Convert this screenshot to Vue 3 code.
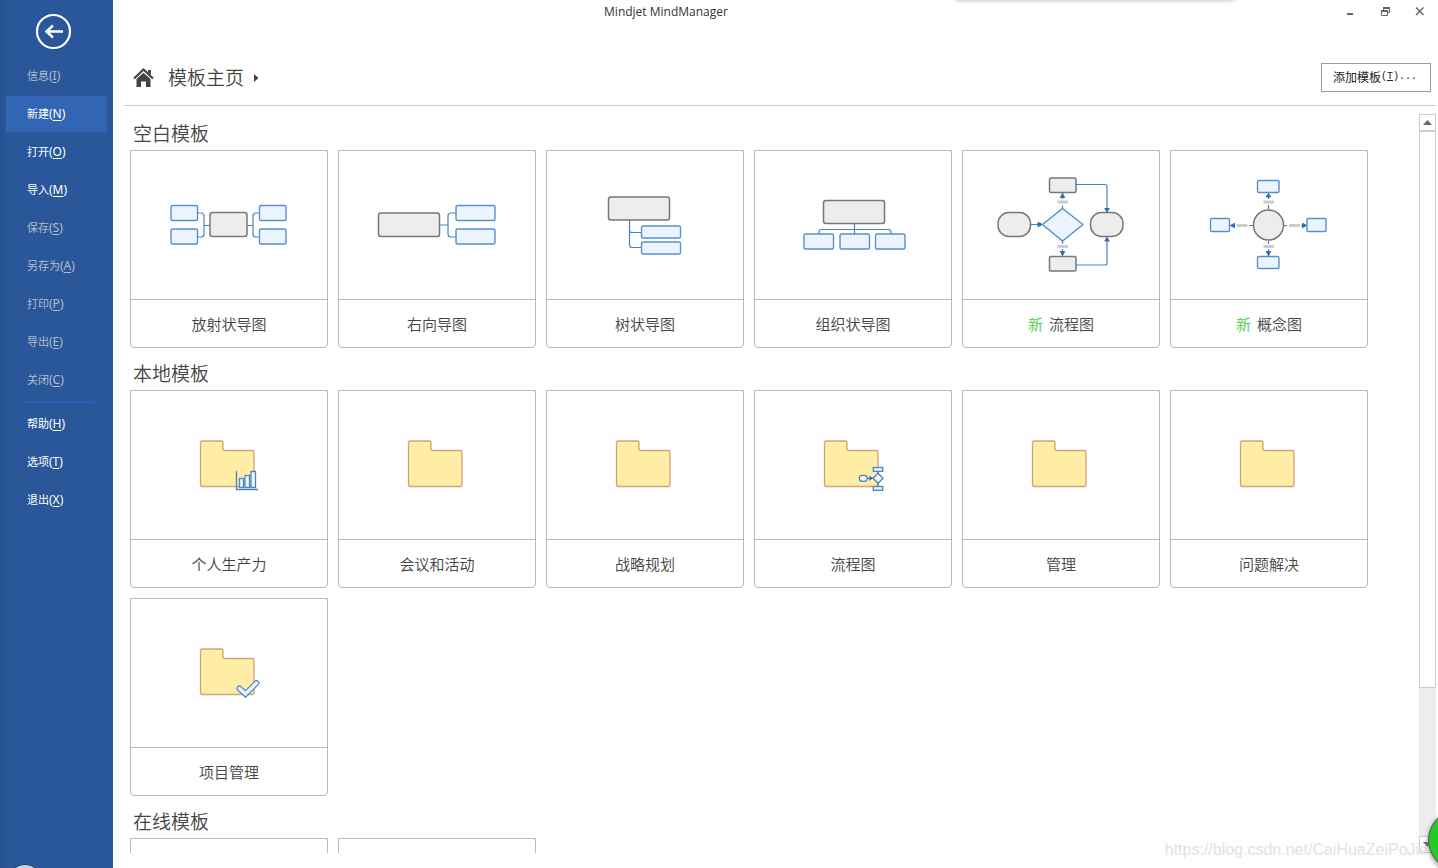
<script setup>
const menu = [
  { text: '信息', key: 'I', disabled: true },
  { text: '新建', key: 'N', active: true },
  { text: '打开', key: 'O' },
  { text: '导入', key: 'M' },
  { text: '保存', key: 'S', disabled: true },
  { text: '另存为', key: 'A', disabled: true },
  { text: '打印', key: 'P', disabled: true },
  { text: '导出', key: 'E', disabled: true },
  { text: '关闭', key: 'C', disabled: true }
]
const appMenu = [
  { text: '帮助', key: 'H' },
  { text: '选项', key: 'T' },
  { text: '退出', key: 'X' }
]
const sections = [
  {
    title: '空白模板',
    cards: [
      { name: '放射状导图', art: 'radial' },
      { name: '右向导图', art: 'right' },
      { name: '树状导图', art: 'tree' },
      { name: '组织状导图', art: 'org' },
      { name: '流程图', art: 'flow', isNew: true },
      { name: '概念图', art: 'concept', isNew: true }
    ]
  },
  {
    title: '本地模板',
    cards: [
      { name: '个人生产力', art: 'folder', badge: 'chart' },
      { name: '会议和活动', art: 'folder' },
      { name: '战略规划', art: 'folder' },
      { name: '流程图', art: 'folder', badge: 'flow' },
      { name: '管理', art: 'folder' },
      { name: '问题解决', art: 'folder' },
      { name: '项目管理', art: 'folder', badge: 'check' }
    ]
  },
  {
    title: '在线模板',
    cards: [{ art: 'folder' }, { art: 'folder' }]
  }
]
</script>

<template>
  <div class="app">
    <aside class="sidebar">
      <button class="back" aria-label="返回">
        <svg width="37" height="37" viewBox="0 0 37 37">
          <circle cx="18.5" cy="18.5" r="16.5" fill="none" stroke="#fff" stroke-width="2.2" />
          <path d="M28 18.5H11.500M18 12.500L11.500 18.500L18 24.500" fill="none" stroke="#fff" stroke-width="2.500" />
        </svg>
      </button>
      <nav class="menu">
        <button
          v-for="m in menu"
          :key="m.key"
          class="item"
          :class="{ active: m.active }"
          :disabled="m.disabled"
        >{{ m.text }}<span class="key">(<u>{{ m.key }}</u>)</span></button>
        <hr class="divider" />
        <button v-for="m in appMenu" :key="m.key" class="item">{{ m.text }}<span class="key">(<u>{{ m.key }}</u>)</span></button>
      </nav>
      <span class="orb"></span>
    </aside>

    <main class="main">
      <header class="titlebar">
        <span class="app-title">Mindjet MindManager</span>
        <div class="controls">
          <button aria-label="最小化">
            <svg width="12" height="12" viewBox="0 0 12 12"><path d="M3 8h6v2H3z" fill="#666" /></svg>
          </button>
          <button aria-label="还原">
            <svg width="12" height="12" viewBox="0 0 12 12">
              <path d="M4.500 5V2.500H10.500V7.500H8.500M2.500 5.500H8.500V10.500H2.500Z" fill="none" stroke="#666" />
              <path d="M4 2h7v2H4zM2 5h7v2H2z" fill="#666" />
            </svg>
          </button>
          <button aria-label="关闭窗口">
            <svg width="12" height="12" viewBox="0 0 12 12"><path d="M2 2.500L9.500 10M9.500 2.500L2 10" stroke="#666" stroke-width="1.500" /></svg>
          </button>
        </div>
      </header>

      <div class="crumbs">
        <svg width="22" height="20" viewBox="0 0 22 20">
          <path d="M1 10.500L10.500 1.500L20 10.500" fill="none" stroke="#444" stroke-width="2.200" />
          <path d="M15 2h3v5l-3-2.500z" fill="#444" />
          <path d="M3.500 11L10.500 4.700L17.500 11V19H13V13.500H8V19H3.500Z" fill="#444" />
        </svg>
        <h1>模板主页</h1>
        <svg width="5" height="8" viewBox="0 0 5 8"><path d="M0 0L4.500 4L0 8Z" fill="#444" /></svg>
        <button class="add">添加模板<span class="add-key">(<u>T</u>)...</span></button>
      </div>

      <div class="body">
        <div class="list">
          <section v-for="s in sections" :key="s.title">
            <h2>{{ s.title }}</h2>
            <div class="grid">
              <button v-for="(c, i) in s.cards" :key="i" class="card">
                <svg class="art" viewBox="1 1 196 148">
                  <g v-if="c.art === 'radial'">
                    <g class="line">
                      <path d="M67.500 63H71Q74 63 74 66V84Q74 87 71 87H67.500M74 75.500H80" />
                      <path d="M129.500 63H126Q123 63 123 66V84Q123 87 126 87H129.500M123 75.500H117" />
                    </g>
                    <rect class="blue" x="41" y="55.500" width="26.500" height="15" rx="1.500" />
                    <rect class="blue" x="41" y="79" width="26.500" height="15" rx="1.500" />
                    <rect class="blue" x="129.500" y="55.500" width="26.500" height="15" rx="1.500" />
                    <rect class="blue" x="129.500" y="79" width="26.500" height="15" rx="1.500" />
                    <rect class="grey" x="80" y="62.500" width="37" height="24" rx="2.500" />
                  </g>
                  <g v-else-if="c.art === 'right'">
                    <path class="line" d="M118 63H113Q110 63 110 66V84Q110 87 113 87H118M102 75H110" />
                    <rect class="grey" x="40.500" y="63" width="61" height="23.500" rx="2.500" />
                    <rect class="blue" x="118" y="55.500" width="39" height="15" rx="1.500" />
                    <rect class="blue" x="118" y="79" width="39" height="15" rx="1.500" />
                  </g>
                  <g v-else-if="c.art === 'tree'">
                    <path class="line" d="M83.500 70V95Q83.500 97.500 86 97.500H95.500M83.500 80Q83.500 82.500 86 82.500H95.500" />
                    <rect class="grey" x="62.500" y="47" width="61" height="23" rx="2.500" />
                    <rect class="blue" x="95.500" y="76" width="39" height="12" rx="1.500" />
                    <rect class="blue" x="95.500" y="92" width="39" height="12" rx="1.500" />
                  </g>
                  <g v-else-if="c.art === 'org'">
                    <path class="line" d="M100.500 73.500V84M65 84V82Q65 79.500 67.500 79.500H134.500Q137 79.500 137 82V84" />
                    <rect class="grey" x="69.500" y="50.500" width="61" height="23" rx="2.500" />
                    <rect class="blue" x="50" y="84" width="29.500" height="15" rx="1.500" />
                    <rect class="blue" x="86" y="84" width="29.500" height="15" rx="1.500" />
                    <rect class="blue" x="121.500" y="84" width="29.500" height="15" rx="1.500" />
                  </g>
                  <g v-else-if="c.art === 'flow'">
                    <path class="line" d="M68.500 74.500H80M114 34.500H143Q145 34.500 145 36.500V62M114 115H143Q145 115 145 113V87M100.500 58.500V55.500M100.500 49V43M100.500 91V94M100.500 99V106" />
                    <path class="tip" d="M80.500 74.500L76 72.300V76.700ZM145 62L142.800 58.500H147.200ZM145 87.500L142.800 91H147.200ZM100.500 43.500L98.300 47.500H102.700ZM100.500 105.500L98.300 101.500H102.700Z" />
                    <rect class="grey" x="36" y="62.500" width="32.500" height="24" rx="11" />
                    <rect class="grey" x="128.500" y="62.500" width="32.500" height="24" rx="11" />
                    <rect class="grey" x="87.500" y="28" width="26.500" height="14.500" rx="1.500" />
                    <rect class="grey" x="87.500" y="106.500" width="26.500" height="14.500" rx="1.500" />
                    <path class="blue" d="M100.500 58.500L121 74.500L100.500 91L80.500 74.500Z" />
                    <path class="tag" d="M95.500 50.500h10.500v3H95.500zM95.500 95h10.500v3H95.500z" />
                  </g>
                  <g v-else-if="c.art === 'concept'">
                    <path class="line" d="M98.500 59V55M98.500 49V43M98.500 91V94M98.500 99V106M83 75.500H79M65 75.500H60M114 75.500H117M131 75.500H137" />
                    <path class="tip" d="M98.500 43.500L96.300 47H100.700ZM98.500 105.500L96.300 101.500H100.700ZM60.500 75.500L64.500 73.300V77.700ZM136.500 75.500L132.500 73.300V77.700Z" />
                    <circle class="grey" cx="98.500" cy="75" r="15" />
                    <rect class="blue" x="87.500" y="30.500" width="21.500" height="12" rx="1.500" />
                    <rect class="blue" x="87.500" y="106.500" width="21.500" height="12" rx="1.500" />
                    <rect class="blue" x="40.500" y="68.500" width="19" height="13" rx="1" />
                    <rect class="blue" x="137" y="68.500" width="19" height="13" rx="1" />
                    <path class="tag" d="M93.500 50.500h10.500v3H93.500zM93.500 95h10.500v3H93.500zM66.500 74h11v3h-11zM119 74h11v3h-11z" />
                  </g>
                  <g v-else>
                    <path class="folder" d="M72 51H91.500Q93 51 93 52.500V58.500Q93 60.500 95 60.500H122.500Q124 60.500 124 62V95Q124 96.500 122.500 96.500H72Q70.500 96.500 70.500 95V52.500Q70.500 51 72 51Z" />
                    <g v-if="c.badge === 'chart'" class="mini">
                      <path d="M106.500 81V99.500H128" />
                      <rect x="109.500" y="88.500" width="4" height="9" />
                      <rect x="115" y="85.500" width="4.500" height="12" />
                      <rect x="121" y="81.500" width="4.500" height="16" />
                    </g>
                    <g v-else-if="c.badge === 'flow'" class="mini">
                      <path d="M124 81V84M124 93V96.500M113.500 88.300H119" />
                      <path class="tip" d="M118 88.300L116 87V89.600Z" />
                      <rect x="119.300" y="77.500" width="9.400" height="3.800" />
                      <rect x="119.300" y="96.500" width="9.400" height="3.800" />
                      <rect x="105.300" y="85.300" width="8" height="6" rx="3" />
                      <path d="M124 83.300L129 88.300L124 93.300L119 88.300Z" />
                    </g>
                    <g v-else-if="c.badge === 'check'" class="check">
                      <path class="check-edge" d="M109.500 90.500L115.500 96L126.500 85" />
                      <path class="check-fill" d="M109.500 90.500L115.500 96L126.500 85" />
                    </g>
                  </g>
                </svg>
                <span class="name"><span v-if="c.isNew" class="new">新</span>{{ c.name }}</span>
              </button>
            </div>
          </section>
        </div>
        <div class="scrollbar">
          <button aria-label="向上滚动"><svg width="9" height="5" viewBox="0 0 9 5"><path d="M0 5L4.500 0L9 5Z" fill="#666" /></svg></button>
          <div class="track"><div class="thumb"></div></div>
          <button aria-label="向下滚动"><svg width="9" height="5" viewBox="0 0 9 5"><path d="M0 0L4.500 5L9 0Z" fill="#666" /></svg></button>
        </div>
      </div>
    </main>

    <span class="dock-shadow"></span>
    <span class="watermark">https://blog.csdn.net/CaiHuaZeiPoJie</span>
    <span class="bubble"></span>
  </div>
</template>

<style>
html, body {
  margin: 0;
  background: #fff;
}
</style>

<style scoped>
.app {
  position: relative;
  display: flex;
  height: 100vh;
  overflow: hidden;
  color: #444;
  font-family: "Noto Sans", "Noto Sans CJK SC", sans-serif;
}
button {
  margin: 0;
  padding: 0;
  border: 0;
  background: none;
  color: inherit;
  font: inherit;
}
svg {
  display: block;
  flex: none;
}
.sidebar {
  position: relative;
  box-sizing: border-box;
  flex: none;
  width: 113px;
  padding: 13px 6px 0;
  overflow: hidden;
  background: linear-gradient(90deg, #254f8c, #2a579a 5px);
}
.back {
  display: block;
  margin: 0 0 8px 29px;
}
.menu {
  display: flex;
  flex-direction: column;
  gap: 2px;
}
.item {
  display: flex;
  align-items: center;
  box-sizing: border-box;
  height: 36px;
  padding: 0 0 2px 21px;
  color: #fff;
  font-size: 11px;
}
.key {
  font-size: 12px;
}
.item.active {
  background: #3265b3;
}
.item:disabled {
  color: #b5bccb;
}
.item u {
  text-underline-offset: 2px;
}
.divider {
  width: 75px;
  height: 1px;
  margin: 2px 0 1px 14px;
  border: 0;
  background: #2565cb;
}
.orb {
  position: absolute;
  left: 8px;
  bottom: -30px;
  width: 34px;
  height: 34px;
  box-sizing: border-box;
  border: 1px solid #1b3f75;
  border-radius: 50%;
  background: #c5d3e2;
}
.main {
  display: flex;
  flex: 1;
  flex-direction: column;
  min-width: 0;
  padding-bottom: 15px;
}
.titlebar {
  display: flex;
  align-items: center;
  height: 22px;
}
.app-title {
  flex: 1;
  padding-right: 113px;
  text-align: center;
  font-family: "Open Sans", sans-serif;
  font-size: 12px;
  color: #333;
}
.controls {
  display: flex;
  gap: 23px;
  width: 94px;
  padding-left: 12px;
}
.crumbs {
  display: flex;
  align-items: center;
  box-sizing: border-box;
  height: 56px;
  margin: 28px 2px 0 11px;
  padding: 0 5px 0 9px;
  border-bottom: 1px solid #ccc;
}
h1, h2 {
  margin: 0;
  font-size: 19px;
  font-weight: 350;
}
h1 {
  margin: 0 10px 0 13px;
  padding-bottom: 2px;
}
.add {
  display: flex;
  align-items: center;
  justify-content: center;
  box-sizing: border-box;
  width: 110px;
  height: 29px;
  margin-left: auto;
  padding: 0 2px 2px 0;
  border: 1px solid #999;
  color: #222;
  font-size: 12px;
}
.add-key {
  font-family: "Liberation Mono", monospace;
  font-size: 10px;
}
.body {
  display: flex;
  flex: 1;
  min-height: 0;
}
.list {
  flex: 1;
  padding: 2px 17px 0;
  overflow: hidden;
}
h2 {
  padding: 10px 3px 0;
  line-height: 32px;
}
.grid {
  display: grid;
  grid-template-columns: repeat(auto-fill, 198px);
  gap: 10px;
}
.card {
  display: flex;
  flex-direction: column;
  box-sizing: border-box;
  height: 198px;
  border: 1px solid #bbb;
  border-radius: 0 0 4px 4px;
}
.art {
  width: 196px;
  height: 148px;
}
.name {
  display: flex;
  align-items: center;
  justify-content: center;
  gap: 6px;
  box-sizing: border-box;
  width: 100%;
  height: 48px;
  border-top: 1px solid #bbb;
  font-size: 15px;
  font-weight: 350;
}
.new {
  color: #4c4;
}
.line, .line path {
  fill: none;
  stroke: #4a83c3;
  stroke-width: 1.2;
}
.blue {
  fill: #ecf5ff;
  stroke: #5a8fca;
  stroke-width: 1.4;
}
.grey {
  fill: #ededed;
  stroke: #777;
  stroke-width: 1.5;
}
.tip, .mini .tip {
  fill: #2f6fb5;
  stroke: #2f6fb5;
}
.tag {
  fill: #ccc;
}
.folder {
  fill: #ffeda6;
  stroke: #cfa47c;
  stroke-width: 1.3;
}
.mini path, .mini rect {
  fill: #eef6ff;
  stroke: #4a83bd;
  stroke-width: 1.3;
}
.mini path:first-child {
  fill: none;
}
.check path {
  fill: none;
  stroke-linecap: round;
}
.check-edge {
  stroke: #5b8fc9;
  stroke-width: 6;
}
.check-fill {
  stroke: #e8f3ff;
  stroke-width: 3.4;
}
.scrollbar {
  display: flex;
  flex-direction: column;
  flex: none;
  width: 17px;
  margin: 8px 2px 0 0;
}
.scrollbar button {
  display: flex;
  align-items: center;
  justify-content: center;
  box-sizing: border-box;
  height: 17px;
  border: 1px solid #ccc;
}
.track {
  flex: 1;
  background: #ededed;
}
.thumb {
  box-sizing: border-box;
  height: 79%;
  border: 1px solid #ccc;
  background: #fff;
}
.dock-shadow {
  position: absolute;
  top: -8px;
  right: 204px;
  width: 278px;
  height: 8px;
  box-shadow: 0 0 4px #aaa;
}
.watermark {
  position: absolute;
  right: 10px;
  bottom: 8px;
  font-family: "Liberation Sans", sans-serif;
  font-size: 16px;
  line-height: 20px;
  color: #e2e2e2;
}
.bubble {
  position: absolute;
  right: -52px;
  bottom: -3px;
  width: 62px;
  height: 62px;
  box-sizing: border-box;
  border: 1px solid #555;
  border-radius: 50%;
  background: #2c2;
  box-shadow: 0 2px 5px #888;
}
</style>
